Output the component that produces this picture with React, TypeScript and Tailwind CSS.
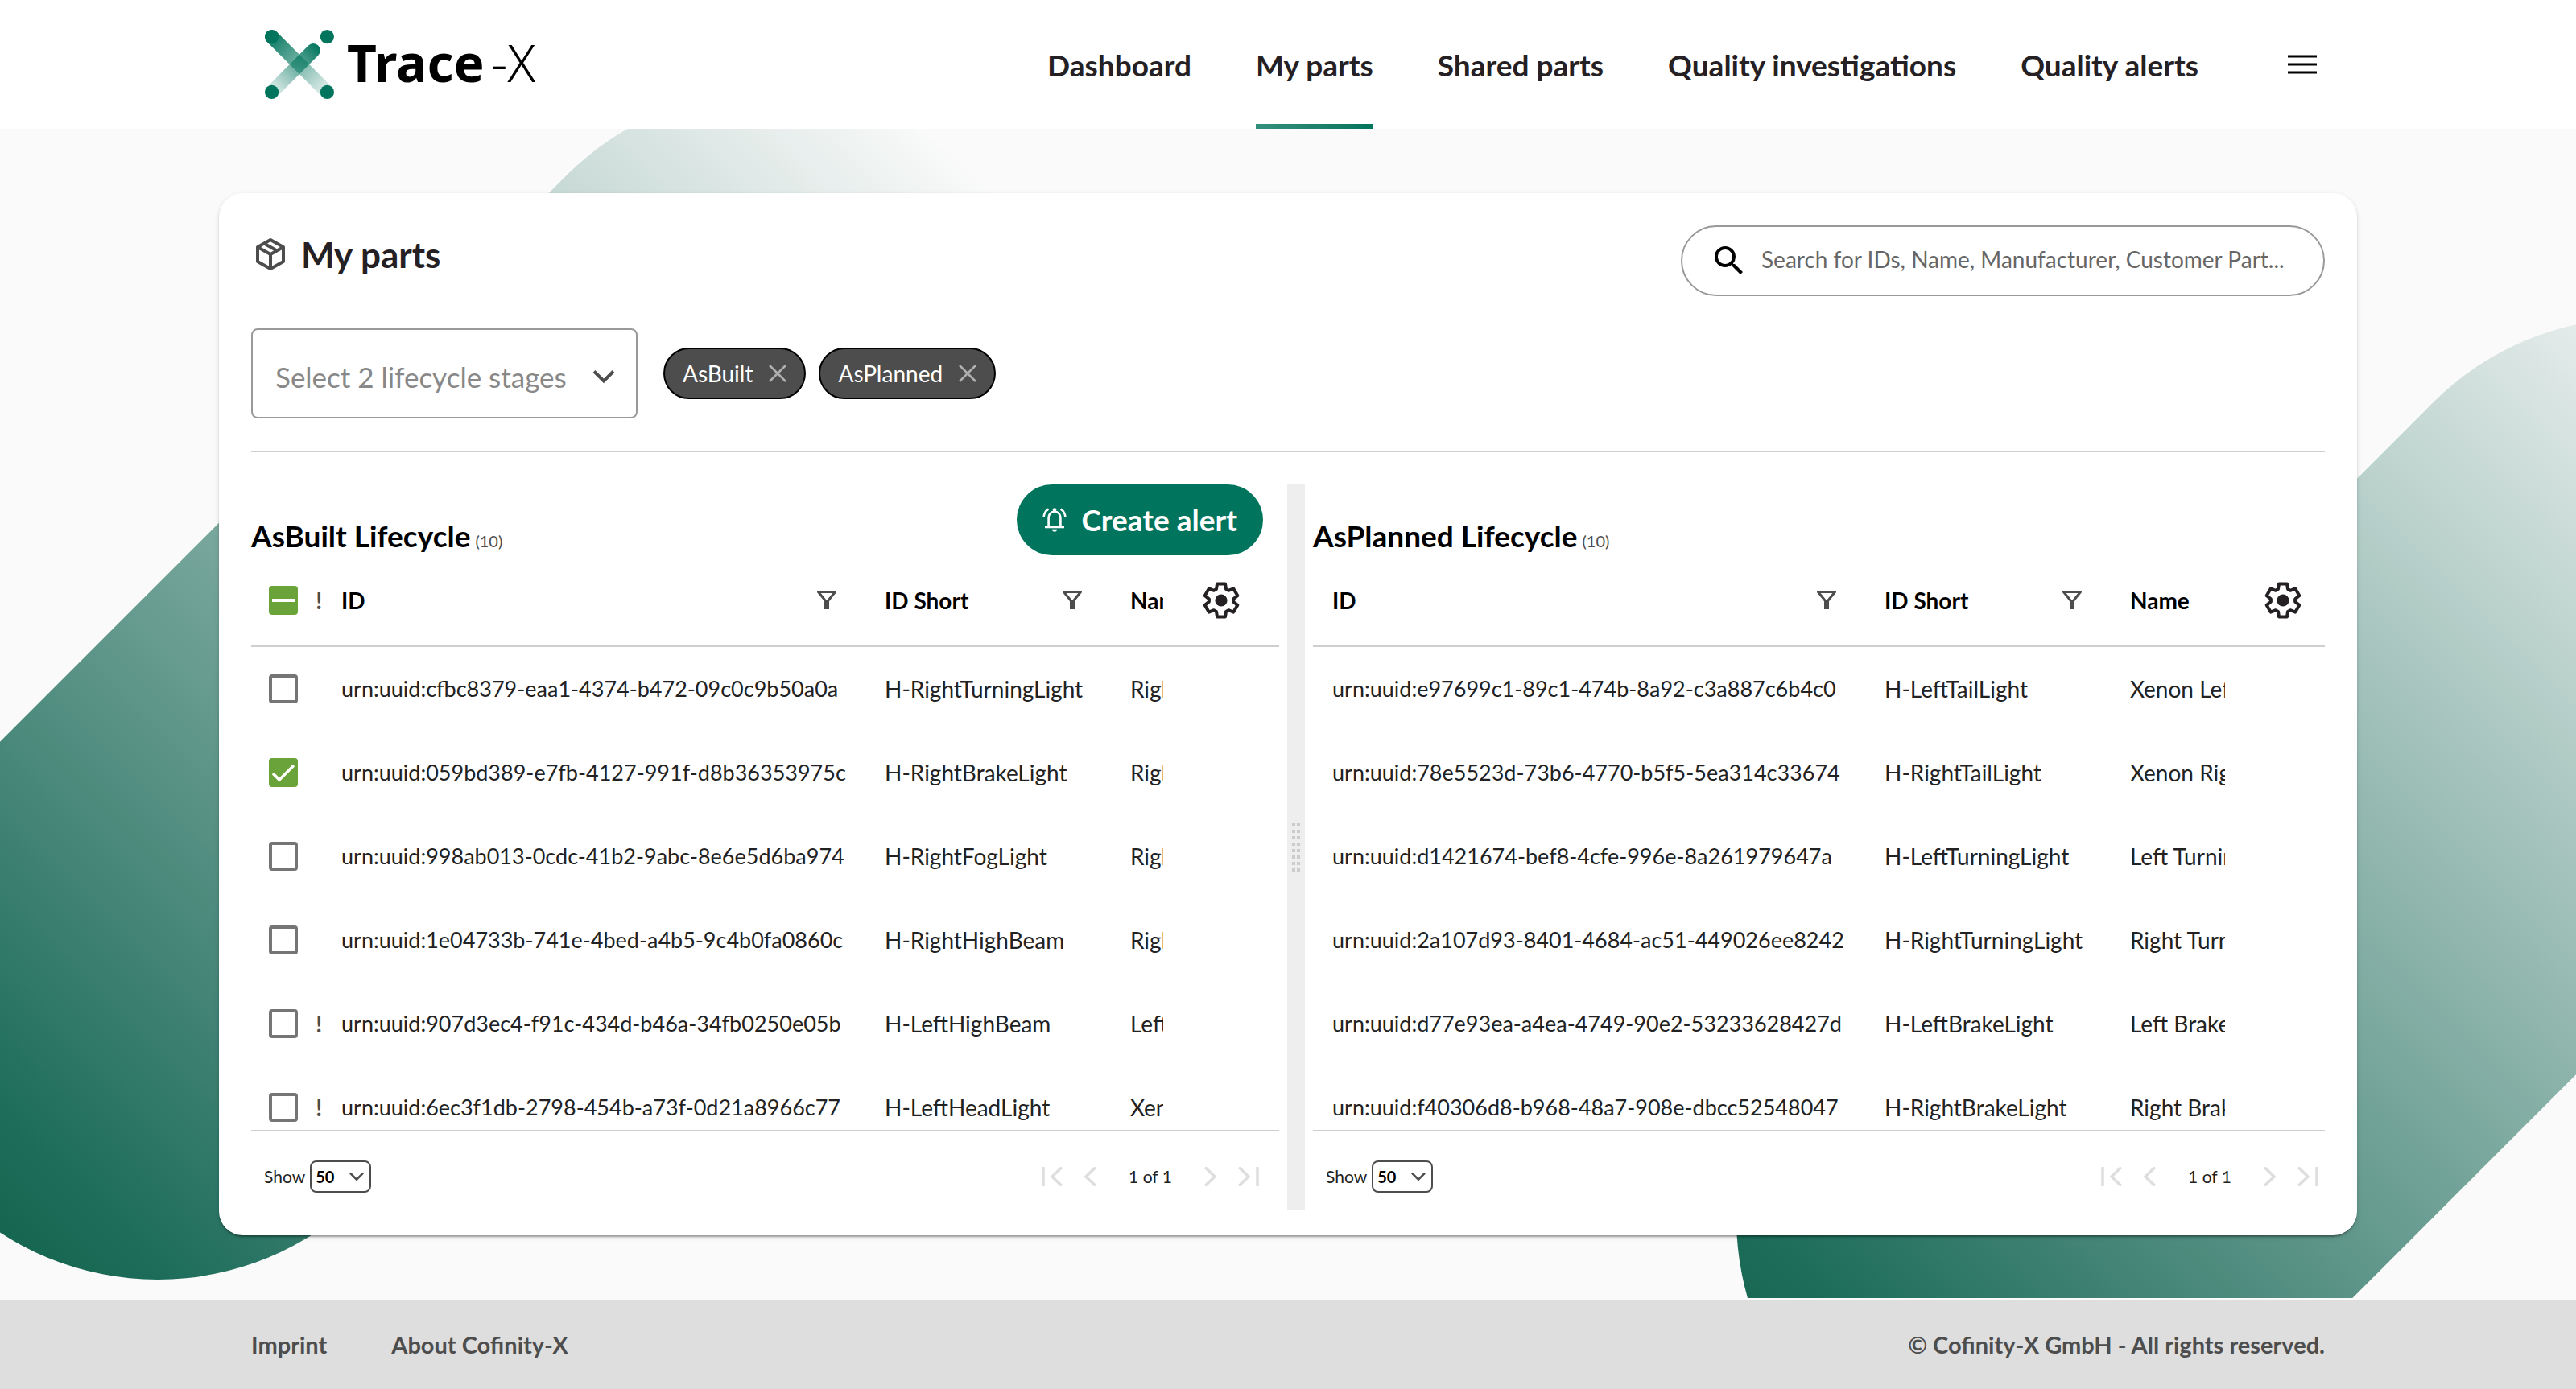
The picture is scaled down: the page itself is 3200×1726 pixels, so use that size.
import type { ReactNode } from "react";
import { MdSearch } from "react-icons/md";

type Part = {
  id: string;
  idShort: string;
  name: string;
  checked?: boolean;
  alert?: boolean;
};

const asBuilt: Part[] = [
  { id: "urn:uuid:cfbc8379-eaa1-4374-b472-09c0c9b50a0a", idShort: "H-RightTurningLight", name: "Right Turning Light" },
  { id: "urn:uuid:059bd389-e7fb-4127-991f-d8b36353975c", idShort: "H-RightBrakeLight", name: "Right Brake Light", checked: true },
  { id: "urn:uuid:998ab013-0cdc-41b2-9abc-8e6e5d6ba974", idShort: "H-RightFogLight", name: "Right Fog Light" },
  { id: "urn:uuid:1e04733b-741e-4bed-a4b5-9c4b0fa0860c", idShort: "H-RightHighBeam", name: "Right High Beam" },
  { id: "urn:uuid:907d3ec4-f91c-434d-b46a-34fb0250e05b", idShort: "H-LeftHighBeam", name: "Left High Beam", alert: true },
  { id: "urn:uuid:6ec3f1db-2798-454b-a73f-0d21a8966c77", idShort: "H-LeftHeadLight", name: "Xenon Left Headlight", alert: true },
];

const asPlanned: Part[] = [
  { id: "urn:uuid:e97699c1-89c1-474b-8a92-c3a887c6b4c0", idShort: "H-LeftTailLight", name: "Xenon Left Taillight" },
  { id: "urn:uuid:78e5523d-73b6-4770-b5f5-5ea314c33674", idShort: "H-RightTailLight", name: "Xenon Right Taillight" },
  { id: "urn:uuid:d1421674-bef8-4cfe-996e-8a261979647a", idShort: "H-LeftTurningLight", name: "Left Turning Light" },
  { id: "urn:uuid:2a107d93-8401-4684-ac51-449026ee8242", idShort: "H-RightTurningLight", name: "Right Turning Light" },
  { id: "urn:uuid:d77e93ea-a4ea-4749-90e2-53233628427d", idShort: "H-LeftBrakeLight", name: "Left Brake Light" },
  { id: "urn:uuid:f40306d8-b968-48a7-908e-dbcc52548047", idShort: "H-RightBrakeLight", name: "Right Brake Light" },
];

const navItems = [
  { label: "Dashboard" },
  { label: "My parts", active: true },
  { label: "Shared parts" },
  { label: "Quality investigations" },
  { label: "Quality alerts" },
];

function LogoMark() {
  return (
    <svg viewBox="0 0 86 86" className="size-[86px]" aria-hidden="true">
      <defs>
        <linearGradient id="logo-down" gradientUnits="userSpaceOnUse" x1="8.6" y1="8.6" x2="77.4" y2="77.4">
          <stop offset="0" stopColor="#00745c" stopOpacity="0.95" />
          <stop offset="1" stopColor="#00745c" stopOpacity="0.1" />
        </linearGradient>
        <linearGradient id="logo-up" gradientUnits="userSpaceOnUse" x1="66" y1="19" x2="8.6" y2="77.4">
          <stop offset="0" stopColor="#00745c" />
          <stop offset="1" stopColor="#00745c" stopOpacity="0.1" />
        </linearGradient>
      </defs>
      <path d="M8.6 8.6 77.4 77.4" stroke="url(#logo-down)" strokeWidth="17.2" strokeLinecap="round" />
      <path d="M60.2 25.6 8.6 77.4" stroke="url(#logo-up)" strokeWidth="17.2" strokeLinecap="round" />
      <g fill="#00745c">
        <circle cx="8.6" cy="8.6" r="8.6" />
        <circle cx="77.4" cy="8.6" r="8.6" />
        <circle cx="8.6" cy="77.4" r="8.6" />
        <circle cx="77.4" cy="77.4" r="8.6" />
      </g>
    </svg>
  );
}

function PackageIcon() {
  return (
    <svg viewBox="0 0 40 44" className="h-11 w-10" fill="none" stroke="#4d4d4d" strokeWidth="4" strokeLinejoin="round" aria-hidden="true">
      <path d="M20 4 36 13v18L20 40 4 31V13Z" />
      <path d="M4 13 20 22 36 13M20 22v18M12 8.500 28 17.500" />
    </svg>
  );
}

function Chevron({ className }: { className: string }) {
  return (
    <svg viewBox="0 0 28 18" className={className} fill="none" stroke="#4d4d4d" strokeWidth="4" aria-hidden="true">
      <path d="M2 2.500 14 14.500 26 2.500" />
    </svg>
  );
}

function BellIcon() {
  return (
    <svg viewBox="0 0 30 30" className="size-[30px]" fill="none" stroke="white" strokeWidth="2.6" aria-hidden="true">
      <path d="M7.600 24V12.500a7.400 8 0 0 1 14.800 0V24M3 24h24" />
      <path d="M1.500 12C1.700 7.500 3.700 4 7.300 1.600M28.500 12C28.300 7.500 26.300 4 22.700 1.600" />
      <circle cx="15" cy="2.600" r="2.300" fill="white" stroke="none" />
      <path d="M12 26.800h6a3 3 0 0 1-6 0Z" fill="white" stroke="none" />
    </svg>
  );
}

function FilterIcon() {
  return (
    <svg viewBox="0 0 24 24" className="size-6" fill="none" stroke="#4d4d4d" strokeLinejoin="round" aria-hidden="true">
      <path d="M1.500 1.500h21L12 14.500Z" strokeWidth="3" />
      <path d="M12 13v10" strokeWidth="6" />
    </svg>
  );
}

const toothPath = [0, 60, 120, 180, 240, 300]
  .flatMap((deg) => {
    const a = (deg * Math.PI) / 180;
    return [[-6, -14], [-5, -20.5], [5, -20.5], [6, -14]].map(
      ([x, y]) => `${23 + x * Math.cos(a) - y * Math.sin(a)},${23 + x * Math.sin(a) + y * Math.cos(a)}`,
    );
  })
  .join(" ");

function GearIcon() {
  return (
    <svg viewBox="0 0 46 46" className="size-[46px]" aria-hidden="true">
      <polygon points={toothPath} fill="none" stroke="#252023" strokeWidth="4" strokeLinejoin="round" />
      <circle cx="23" cy="23" r="7.600" fill="#252023" />
    </svg>
  );
}

function Pill({ id, className, x, y }: { id: string; className: string; x: number; y: number }) {
  return (
    <svg viewBox="0 0 1400 1453" className={className} aria-hidden="true">
      <defs>
        <linearGradient id={id} gradientUnits="userSpaceOnUse" x1={x - 253} y1={y + 253} x2={x + 1018} y2={y - 1018}>
          <stop offset="0" stopColor="#15664f" />
          <stop offset="0.06" stopColor="#1d6c5a" />
          <stop offset="1" stopColor="#fafafa" />
        </linearGradient>
      </defs>
      <path d={`M${x} ${y} l761 -761`} stroke={`url(#${id})`} strokeWidth="716" strokeLinecap="round" />
    </svg>
  );
}

function Checkbox({ label, checked = false, mixed = false }: { label: string; checked?: boolean; mixed?: boolean }) {
  return (
    <label className="grid size-9 place-items-center">
      <input
        type="checkbox"
        aria-label={label}
        defaultChecked={checked}
        ref={(el) => {
          if (el) el.indeterminate = mixed;
        }}
        className="col-start-1 row-start-1 size-9 appearance-none rounded-[4px] border-4 border-[#757575] checked:border-[#6ba33b] checked:bg-[#6ba33b] indeterminate:border-[#6ba33b] indeterminate:bg-[#6ba33b]"
      />
      {checked && (
        <svg viewBox="0 0 36 36" className="pointer-events-none z-10 col-start-1 row-start-1 size-9" fill="none" stroke="white" strokeWidth="3.500" aria-hidden="true">
          <path d="M5 19 13 27 31 9" />
        </svg>
      )}
      {mixed && <span className="pointer-events-none z-10 col-start-1 row-start-1 h-1 w-7 bg-white" />}
    </label>
  );
}

function PageButton({ label, d }: { label: string; d: string }) {
  return (
    <button type="button" disabled aria-label={label} className="grid h-10 w-11 place-items-center">
      <svg viewBox="0 0 28 24" className="h-6 w-7" fill="none" stroke="#dedede" strokeWidth="3.500" aria-hidden="true">
        <path d={d} />
      </svg>
    </button>
  );
}

function FilterHead({ title, filter }: { title: string; filter?: boolean }) {
  return (
    <div className="flex items-center justify-between">
      <span>{title}</span>
      {filter && (
        <button type="button" aria-label={`Filter ${title}`}>
          <FilterIcon />
        </button>
      )}
    </div>
  );
}

function PartsPanel({
  name,
  parts,
  selectable = false,
  action,
}: {
  name: string;
  parts: Part[];
  selectable?: boolean;
  action?: ReactNode;
}) {
  return (
    <section className="min-w-0">
      <div className={selectable ? "flex h-[88px] items-end justify-between pr-5" : "flex h-[88px] items-end justify-between"}>
        <h2 className="flex items-baseline gap-1.5 text-[37px] leading-9 font-bold">
          {name} Lifecycle
          <span className="text-[20px] font-normal text-[#4d4d4d]">({10})</span>
        </h2>
        {action}
      </div>
      <div className="h-[716px] overflow-hidden border-b-2 border-[#cfcfcf]">
        <table className="w-full table-fixed border-separate border-spacing-0 text-[28px] whitespace-nowrap text-[#222]">
          <colgroup>
            {selectable && <col className="w-[64px]" />}
            {selectable && <col className="w-[24px]" />}
            <col />
            <col className="w-[305px]" />
            <col className={selectable ? "w-[65px]" : "w-[142px]"} />
            <col className={selectable ? "w-[144px]" : "w-[124px]"} />
          </colgroup>
          <thead>
            <tr className="h-[114px] text-left text-[28px] text-black *:border-b-2 *:border-[#cfcfcf]">
              {selectable && (
                <th className="pl-[22px]">
                  <Checkbox label="Select all parts" mixed />
                </th>
              )}
              {selectable && <th className="text-right text-[#4d4d4d]">!</th>}
              <th className="pr-9 pl-6">
                <FilterHead title="ID" filter />
              </th>
              <th className="pr-9 pl-6">
                <FilterHead title="ID Short" filter />
              </th>
              <th className="overflow-hidden pl-6">
                <FilterHead title="Name" />
              </th>
              <th className="pl-[49px]">
                <button type="button" aria-label={`${name} table settings`} className="block">
                  <GearIcon />
                </button>
              </th>
            </tr>
          </thead>
          <tbody>
            {parts.map((part) => (
              <tr key={part.id} className="h-[104px]">
                {selectable && (
                  <td className="pl-[22px]">
                    <Checkbox label={`Select ${part.idShort}`} checked={part.checked} />
                  </td>
                )}
                {selectable && <td className="text-right font-bold text-[#4d4d4d]">{part.alert ? "!" : ""}</td>}
                <td className="pl-6 text-[27px]">{part.id}</td>
                <td className="pl-6">{part.idShort}</td>
                <td className="overflow-hidden pl-6">{part.name}</td>
                <td />
              </tr>
            ))}
          </tbody>
        </table>
      </div>
      <div className={selectable ? "flex items-center justify-between pt-9 pr-[17px] pb-[22px] pl-4" : "flex items-center justify-between pt-9 pb-[22px] pl-4"}>
        <label className="flex items-center gap-1.5 text-[21px] text-[#222]">
          Show
          <span className="grid items-center">
            <select defaultValue="50" className="col-start-1 row-start-1 h-10 w-[76px] appearance-none rounded-lg border-2 border-[#4d4d4d] bg-white pl-[5px] text-[20px] font-bold text-black">
              <option value="50">50</option>
            </select>
            <Chevron className="pointer-events-none col-start-1 row-start-1 mr-2 h-3 w-5 justify-self-end" />
          </span>
        </label>
        <div className="flex items-center gap-[3px]">
          <PageButton label="First page" d="M2 0v24M25 0.500 13 12 25 23.500" />
          <PageButton label="Previous page" d="M20 0.500 8 12 20 23.500" />
          <span className="w-[98px] text-center text-[21px] text-[#222]">1 of 1</span>
          <PageButton label="Next page" d="M8 0.500 20 12 8 23.500" />
          <PageButton label="Last page" d="M26 0v24M3 0.500 15 12 3 23.500" />
        </div>
      </div>
    </section>
  );
}

function Chip({ label }: { label: string }) {
  return (
    <span className="flex h-16 items-center gap-5 rounded-full border-2 border-black bg-[#4d4d4d] px-[22px] text-[28px] text-white">
      {label}
      <button type="button" aria-label={`Remove ${label}`}>
        <svg viewBox="0 0 22 22" className="size-[22px]" stroke="#b0b0b0" strokeWidth="2.500" aria-hidden="true">
          <path d="M1 1 21 21M21 1 1 21" />
        </svg>
      </button>
    </span>
  );
}

export default function App() {
  return (
    <div className="flex min-h-screen flex-col bg-[#fafafa] font-[Lato,sans-serif] text-black">
      <header className="flex h-40 items-stretch justify-between bg-white px-[312px]">
        <a href="#home" className="flex items-center gap-4 pl-[17px] font-['Noto_Sans',sans-serif] text-[64px] leading-none">
          <LogoMark />
          <span className="flex items-baseline gap-2 pb-1">
            <span className="font-bold">Trace</span>
            <span className="font-light">-X</span>
          </span>
        </a>
        <div className="flex items-stretch gap-[101px]">
          <nav className="flex gap-20 text-[37px] font-bold text-[#252023]">
            {navItems.map((item) => (
              <a key={item.label} href="#nav" className="relative flex items-center pt-0.5">
                {item.label}
                {item.active && <span className="absolute inset-x-0 bottom-0 h-1.5 bg-linear-to-r from-[#33907c] to-[#00745c]" />}
              </a>
            ))}
          </nav>
          <button type="button" aria-label="Menu" className="grid w-14 place-items-center">
            <svg viewBox="0 0 36 24" className="h-6 w-9" stroke="black" strokeWidth="3" aria-hidden="true">
              <path d="M0 2h36M0 12h36M0 22h36" />
            </svg>
          </button>
        </div>
      </header>

      <main className="relative mb-0.5 grow overflow-hidden px-[272px] pt-20 pb-[78px]">
        <Pill id="pill-left" className="absolute top-0 left-0 h-[1453px] w-[1400px]" x={196} y={1072} />
        <Pill id="pill-right" className="absolute top-0 right-0 h-[1453px] w-[1400px]" x={715} y={1354} />

        <div className="relative rounded-[30px] bg-white px-10 pt-10 pb-[31px] shadow-[0_4px_2px_-2px_rgba(0,0,0,0.2),0_2px_2px_rgba(0,0,0,0.14),0_2px_6px_rgba(0,0,0,0.12)]">
          <div className="flex h-[88px] items-center justify-between">
            <h1 className="flex items-center gap-[18px] pb-4 pl-1 text-[44px] font-bold text-[#252023]">
              <PackageIcon />
              My parts
            </h1>
            <label className="flex h-[88px] w-[800px] items-center gap-4 rounded-full border-2 border-[#999] pr-10 pl-[34px]">
              <MdSearch className="size-12 shrink-0" />
              <input
                type="text"
                aria-label="Search parts"
                placeholder="Search for IDs, Name, Manufacturer, Customer Part..."
                className="min-w-0 grow bg-transparent pb-1 text-[28px] outline-none placeholder:text-[#666] placeholder:opacity-100"
              />
            </label>
          </div>

          <div className="mt-10 flex items-center gap-4">
            <div className="mr-4 grid items-center">
              <select
                aria-label="Lifecycle stages"
                defaultValue="2"
                className="col-start-1 row-start-1 h-28 w-[480px] appearance-none rounded-lg border-2 border-[#999] bg-white pt-2 pl-7 text-[35px] text-[#888]"
              >
                <option value="2">Select 2 lifecycle stages</option>
              </select>
              <Chevron className="pointer-events-none col-start-1 row-start-1 mt-2 mr-7 h-[18px] w-7 justify-self-end" />
            </div>
            <Chip label="AsBuilt" />
            <Chip label="AsPlanned" />
          </div>

          <hr className="mt-10 border-t-2 border-[#cfcfcf]" />

          <div className="mt-10 grid grid-cols-[1277fr_22px_1257fr] gap-2.5">
            <PartsPanel
              name="AsBuilt"
              parts={asBuilt}
              selectable
              action={
                <button type="button" className="flex h-[88px] items-center gap-[18px] rounded-full bg-[#00745c] px-8 text-[37px] font-bold text-white">
                  <BellIcon />
                  Create alert
                </button>
              }
            />
            <div className="grid place-items-center bg-[#eee]">
              <div className="grid grid-cols-2 gap-x-0.5 gap-y-1">
                {Array.from({ length: 16 }, (_, i) => (
                  <span key={i} className="size-1 bg-[#ccc]" />
                ))}
              </div>
            </div>
            <PartsPanel name="AsPlanned" parts={asPlanned} />
          </div>
        </div>
      </main>

      <footer className="flex h-[111px] items-center justify-between bg-[#dedede] px-[312px] text-[29px] font-bold text-[#4d4d4d]">
        <nav className="flex gap-20">
          <a href="#imprint">Imprint</a>
          <a href="#about">About Cofinity-X</a>
        </nav>
        <p>© Cofinity-X GmbH - All rights reserved.</p>
      </footer>
    </div>
  );
}
